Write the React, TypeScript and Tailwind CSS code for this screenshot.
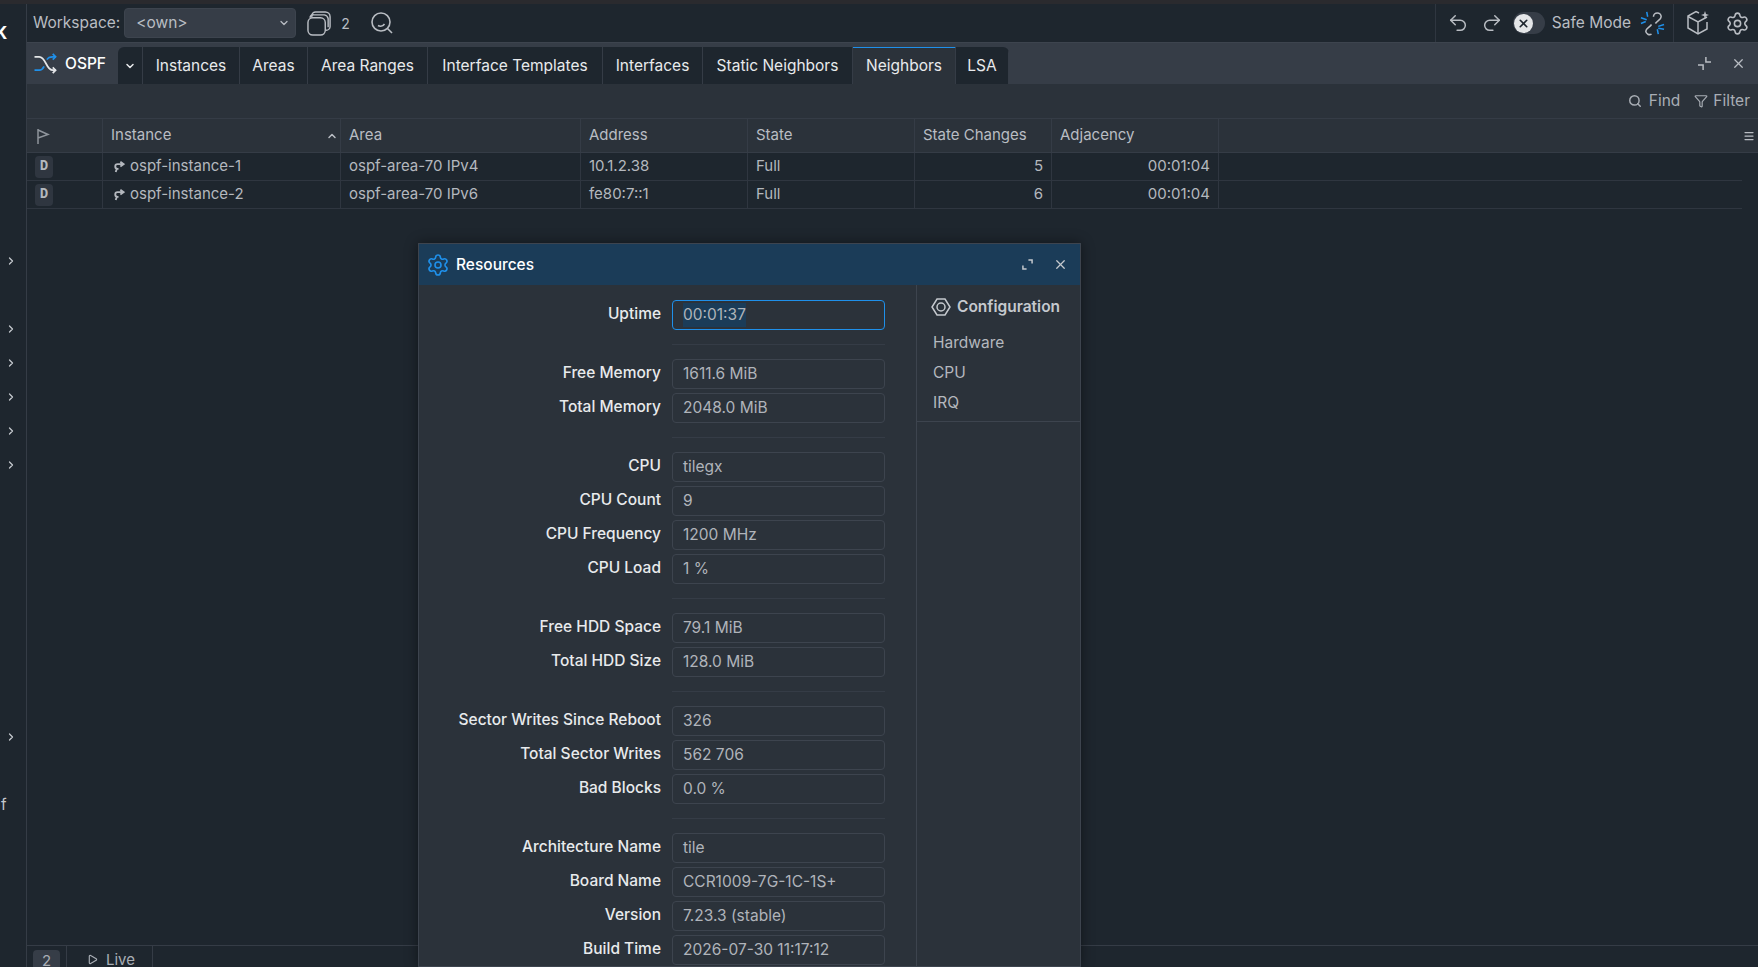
import { ChevronDown, ChevronRight, ChevronUp, Maximize2, Menu, Search, Filter, Settings, Undo2, Redo2, X, Play } from "lucide-react";

const tabs = [
  { label: "Instances", w: "w-[97px]" },
  { label: "Areas", w: "w-[68px]" },
  { label: "Area Ranges", w: "w-[120px]" },
  { label: "Interface Templates", w: "w-[175px]" },
  { label: "Interfaces", w: "w-[100px]" },
  { label: "Static Neighbors", w: "w-[150px]" },
  { label: "Neighbors", w: "w-[103px]", active: true },
  { label: "LSA", w: "w-[53px]" },
];

const columns = [
  { label: "Instance", w: "w-[238px]", sort: true },
  { label: "Area", w: "w-[240px]" },
  { label: "Address", w: "w-[167px]" },
  { label: "State", w: "w-[167px]" },
  { label: "State Changes", w: "w-[137px]" },
  { label: "Adjacency", w: "w-[167px]" },
];

const rows = [
  { instance: "ospf-instance-1", area: "ospf-area-70 IPv4", address: "10.1.2.38", state: "Full", changes: "5", adjacency: "00:01:04" },
  { instance: "ospf-instance-2", area: "ospf-area-70 IPv6", address: "fe80:7::1", state: "Full", changes: "6", adjacency: "00:01:04" },
];

const sections = [
  [{ label: "Uptime", value: "00:01:37", focus: true }],
  [
    { label: "Free Memory", value: "1611.6 MiB" },
    { label: "Total Memory", value: "2048.0 MiB" },
  ],
  [
    { label: "CPU", value: "tilegx" },
    { label: "CPU Count", value: "9" },
    { label: "CPU Frequency", value: "1200 MHz" },
    { label: "CPU Load", value: "1 %" },
  ],
  [
    { label: "Free HDD Space", value: "79.1 MiB" },
    { label: "Total HDD Size", value: "128.0 MiB" },
  ],
  [
    { label: "Sector Writes Since Reboot", value: "326" },
    { label: "Total Sector Writes", value: "562 706" },
    { label: "Bad Blocks", value: "0.0 %" },
  ],
  [
    { label: "Architecture Name", value: "tile" },
    { label: "Board Name", value: "CCR1009-7G-1C-1S+" },
    { label: "Version", value: "7.23.3 (stable)" },
    { label: "Build Time", value: "2026-07-30 11:17:12" },
  ],
];

function Sidebar() {
  return (
    <div className="w-[27px] shrink-0 border-r border-[#353c46] bg-[#1e262e] flex flex-col overflow-hidden text-[#c5c9ce]">
      <div className="mt-[18px] h-[22px] text-[17px] leading-[22px] font-bold text-white -ml-[5px]">K</div>
      <ChevronRight size={12} strokeWidth={2.5} className="ml-[5px] mt-[211px]" />
      <ChevronRight size={12} strokeWidth={2.5} className="ml-[5px] mt-[56px]" />
      <ChevronRight size={12} strokeWidth={2.5} className="ml-[5px] mt-[22px]" />
      <ChevronRight size={12} strokeWidth={2.5} className="ml-[5px] mt-[22px]" />
      <ChevronRight size={12} strokeWidth={2.5} className="ml-[5px] mt-[22px]" />
      <ChevronRight size={12} strokeWidth={2.5} className="ml-[5px] mt-[22px]" />
      <ChevronRight size={12} strokeWidth={2.5} className="ml-[5px] mt-[260px]" />
      <div className="mt-[52px] ml-[1px] text-[15px] leading-[20px]">f</div>
    </div>
  );
}

function TopBar() {
  return (
    <div className="h-[38px] shrink-0 flex items-center bg-[#1e262e] text-[#b9bdc3] text-[15.5px] pl-[6px]">
      <span>Workspace:</span>
      <div className="ml-[4px] w-[172px] h-[30px] rounded-[4px] bg-[#363d47] border border-[#3d444e] flex items-center justify-between pl-[11px] pr-[5px]">
        <span>&lt;own&gt;</span>
        <ChevronDown size={12} strokeWidth={2.5} />
      </div>
      <svg viewBox="0 0 26 28" className="ml-[11px] w-[25px] h-[27px]" fill="none" stroke="currentColor" strokeWidth="1.5">
        <rect x="1" y="8" width="18" height="18" rx="5" />
        <path d="M5 8V6a4 4 0 0 1 4-4h10a5 5 0 0 1 5 5v10a4 4 0 0 1-4 4h-1" />
        <path d="M3 8a4 4 0 0 1 4-3h11a5 5 0 0 1 4 4v9" />
      </svg>
      <span className="ml-[9px] text-[14px]">2</span>
      <svg viewBox="0 0 24 24" className="ml-[20px] w-[24px] h-[24px]" fill="none" stroke="currentColor" strokeWidth="1.6">
        <circle cx="11" cy="11" r="9" />
        <path d="M17.5 17.5 22 22" />
        <path d="M8 14.5a5 5 0 0 0 6.5-1.5" />
      </svg>
      <div className="ml-auto h-full flex items-center border-l border-[#2f3640] pl-[11px]">
        <Undo2 size={22} strokeWidth={1.6} />
        <Redo2 size={22} strokeWidth={1.6} className="ml-[12px]" />
        <div className="ml-[10px] w-[32px] h-[22px] rounded-full bg-[#363d47] flex items-center pl-[1px]">
          <span className="w-[19px] h-[19px] rounded-full bg-[#e4e6e8] flex items-center justify-center">
            <X size={13} strokeWidth={3} className="text-[#1e262e]" />
          </span>
        </div>
        <span className="ml-[7px]">Safe Mode</span>
        <svg viewBox="0 0 26 26" className="ml-[9px] w-[25px] h-[25px]" fill="none" strokeWidth="1.6">
          <path d="M14 6a4 4 0 0 1 8 0c0 3-4 4-6 7M12 14c-2 3-6 4-6 7a4 4 0 0 0 6 3" stroke="#b9bdc3" />
          <path d="M7 1l1 5M1 7l6 2M1 13l5-2M19 24l-1-5M25 19l-6-1M25 14l-6 2" stroke="#1f90ea" />
        </svg>
        <div className="ml-[8px] h-full w-[85px] border-l border-[#2f3640] flex items-center pl-[12px] gap-[15px]">
          <svg viewBox="0 0 24 26" className="w-[24px] h-[26px] shrink-0" fill="none" stroke="currentColor" strokeWidth="1.5">
            <path d="M13 3 10 1.5 2 6v12l10 6 9-5V12" />
            <path d="M2 6.5 12 12l9-5M12 12v12" />
            <path d="M19 1l1 3 3 1-3 1-1 3-1-3-3-1 3-1z" fill="currentColor" stroke="none" />
          </svg>
          <Settings size={25} strokeWidth={1.5} className="shrink-0" />
        </div>
      </div>
    </div>
  );
}

function TabBar() {
  return (
    <div className="h-[42px] shrink-0 flex items-end bg-[#363d47] border-t border-[#3d444e]">
      <div className="w-[91px] h-full flex items-center pl-[6px] gap-[6px] text-white font-medium text-[15.5px]">
        <svg viewBox="0 0 26 24" className="w-[26px] h-[23px]" fill="none" strokeWidth="1.8">
          <path d="M1 5h5c3 0 5 3 7 7s4 7 7 7h3" stroke="#e4e6e8" />
          <path d="M20 16l3 3-3 3" stroke="#e4e6e8" />
          <path d="M1 19h5c2 0 4-2 5-4M14 8c1-2 3-3 6-3h3" stroke="#1f90ea" />
          <path d="M20 2l3 3-3 3" stroke="#1f90ea" />
        </svg>
        OSPF
      </div>
      <div className="h-[37px] flex rounded-tr-[6px] overflow-hidden text-[#e8eaec] text-[15.5px]">
        <div className="w-[25px] bg-[#1e262e] rounded-tl-[6px] border-r border-[#353c46] flex items-center justify-center">
          <ChevronDown size={12} strokeWidth={3} />
        </div>
        {tabs.map((tab) => (
          <div
            key={tab.label}
            className={`${tab.w} flex items-center justify-center border-r border-[#353c46] ${tab.active ? "bg-[#2b323a] border-t-[2px] border-t-[#1f90ea] -mt-[1px]" : "bg-[#1e262e]"}`}
          >
            {tab.label}
          </div>
        ))}
      </div>
      <div className="ml-auto h-full flex items-center gap-[20px] pr-[12px] text-[#b9bdc3]">
        <svg viewBox="0 0 14 14" className="w-[13px] h-[13px]" fill="none" stroke="currentColor" strokeWidth="1.6">
          <path d="M8.5 0v5.5H14M5.5 14V8.5H0" />
        </svg>
        <X size={15} strokeWidth={2} />
      </div>
    </div>
  );
}

function Toolbar() {
  return (
    <div className="h-[34px] shrink-0 flex items-center justify-end gap-[14px] bg-[#2b323a] text-[#a9aeb5] text-[15.5px] pr-[8px]">
      <span className="flex items-center gap-[7px]">
        <Search size={14} strokeWidth={2.5} />
        Find
      </span>
      <span className="flex items-center gap-[5px]">
        <Filter size={14} strokeWidth={2} />
        Filter
      </span>
    </div>
  );
}

function NeighborTable() {
  return (
    <div className="text-[15px]">
      <div className="h-[35px] flex items-stretch bg-[#2b323a] border-y border-[#353c46] text-[#b9bdc3]">
        <div className="w-[76px] flex items-center pl-[9px] border-r border-[#353c46] text-[#8e949b]">
          <svg viewBox="0 0 14 16" className="w-[14px] h-[16px]" fill="none" stroke="currentColor" strokeWidth="1.5">
            <path d="M2 1v15M2 2l10 4.5L2 10" />
          </svg>
        </div>
        {columns.map((col) => (
          <div key={col.label} className={`${col.w} relative flex items-center pl-[8px] border-r border-[#353c46]`}>
            {col.label}
            {col.sort && <ChevronUp size={12} strokeWidth={3} className="absolute right-[2px]" />}
          </div>
        ))}
        <div className="flex-1 flex items-center justify-end pr-[3px]">
          <Menu size={12} strokeWidth={2.5} />
        </div>
      </div>
      {rows.map((row) => (
        <div key={row.instance} className="h-[28px] mr-[16px] flex items-stretch border-b border-[#2f3640] text-[#b4b8be]">
          <div className="w-[76px] flex items-center pl-[8px] border-r border-[#2f3640]">
            <span className="w-[18px] h-[22px] rounded-[4px] bg-[#2f3640] flex items-center justify-center font-['Liberation_Mono',monospace] font-bold text-[14px]">D</span>
          </div>
          <div className="w-[238px] flex items-center pl-[9px] gap-[5px] border-r border-[#2f3640]">
            <svg viewBox="0 0 14 14" className="w-[13px] h-[13px]" fill="none" stroke="currentColor" strokeWidth="2">
              <path d="M9 2l3.5 2.5L9 7M12 4.5H6a2.5 2.5 0 0 0 0 5h1M5 10l-1 3" />
            </svg>
            {row.instance}
          </div>
          <div className="w-[240px] flex items-center pl-[8px] border-r border-[#2f3640]">{row.area}</div>
          <div className="w-[167px] flex items-center pl-[8px] border-r border-[#2f3640]">{row.address}</div>
          <div className="w-[167px] flex items-center pl-[8px] border-r border-[#2f3640]">{row.state}</div>
          <div className="w-[137px] flex items-center justify-end pr-[8px] border-r border-[#2f3640]">{row.changes}</div>
          <div className="w-[167px] flex items-center justify-end pr-[8px] border-r border-[#2f3640]">{row.adjacency}</div>
        </div>
      ))}
    </div>
  );
}

function ResourcesDialog() {
  return (
    <div className="absolute left-[418px] top-[243px] w-[663px] h-[724px] flex flex-col bg-[#2b323a] border border-[#3d444e] shadow-[0_0_12px_rgba(0,0,0,0.45)]">
      <div className="h-[41px] shrink-0 flex items-center bg-[#1b3c58] pl-[7px] pr-[12px] text-white font-medium text-[15.5px]">
        <Settings size={24} strokeWidth={1.6} className="text-[#1f90ea]" />
        <span className="ml-[6px]">Resources</span>
        <svg viewBox="0 0 12 12" className="ml-auto w-[11px] h-[11px] text-[#c5c9ce]" fill="none" stroke="currentColor" strokeWidth="1.6">
          <path d="M7 1h4v4M5 11H1V7" />
        </svg>
        <X size={15} strokeWidth={2} className="ml-[20px] text-[#c5c9ce]" />
      </div>
      <div className="flex-1 flex min-h-0">
        <div className="flex-1 pt-[15px] overflow-hidden">
          {sections.map((section, i) => (
            <div key={i} className={i > 0 ? "mt-[14px] pt-[14px]" : ""}>
              {i > 0 && <div className="-mt-[14px] mb-[14px] ml-[253px] w-[213px] h-px bg-[#353c46]" />}
              <div className="flex flex-col gap-[4px]">
                {section.map((field) => (
                  <div key={field.label} className="flex items-center gap-[11px]">
                    <div className="w-[242px] text-right text-[#e8eaec] font-medium text-[15.5px] -translate-y-px">{field.label}</div>
                    <div className={`w-[213px] h-[30px] flex items-center rounded-[4px] border pl-[10px] text-[#b0b4ba] text-[15.5px] ${field.focus ? "border-[#1f90ea]" : "border-[#3d444e]"}`}>
                      <span className={field.focus ? "bg-[#1b3c58]" : ""}>{field.value}</span>
                    </div>
                  </div>
                ))}
              </div>
            </div>
          ))}
        </div>
        <div className="w-[164px] shrink-0 border-l border-[#3d444e] text-[#b4b8be] text-[15.5px]">
          <div className="h-[137px] border-b border-[#3d444e] pl-[14px] pt-[9px]">
            <div className="h-[26px] flex items-center gap-[6px] font-semibold text-[#c5c9ce]">
              <svg viewBox="0 0 20 20" className="w-[20px] h-[20px]" fill="none" stroke="currentColor" strokeWidth="1.5">
                <path d="M6 2h8l5 8-5 8H6l-5-8z" />
                <circle cx="10" cy="10" r="4" />
              </svg>
              Configuration
            </div>
            <div className="ml-[2px] mt-[12px] flex flex-col gap-[8px] leading-[22px]">
              <div>Hardware</div>
              <div>CPU</div>
              <div>IRQ</div>
            </div>
          </div>
        </div>
      </div>
    </div>
  );
}

export default function App() {
  return (
    <div className="relative h-screen overflow-hidden flex flex-col bg-[#1e262e] font-['Inter',sans-serif]">
      <div className="h-[4px] shrink-0 bg-[#2a2a2e]" />
      <div className="flex-1 flex min-h-0">
        <Sidebar />
        <div className="flex-1 min-w-0 flex flex-col">
          <TopBar />
          <TabBar />
          <Toolbar />
          <NeighborTable />
          <div className="flex-1" />
          <div className="h-[22px] shrink-0 flex border-t border-[#353c46] text-[#a9aeb5] text-[15px]">
            <div className="w-[40px] border-r border-[#353c46] pl-[6px] pt-[4px]">
              <span className="block w-[27px] h-[20px] rounded-[4px] bg-[#363d47] text-center">2</span>
            </div>
            <div className="w-[86px] border-r border-[#353c46] flex items-start pl-[20px] pt-[3px] gap-[8px]">
              <Play size={11} strokeWidth={2.5} className="mt-[5px]" />
              Live
            </div>
          </div>
        </div>
      </div>
      <ResourcesDialog />
    </div>
  );
}
